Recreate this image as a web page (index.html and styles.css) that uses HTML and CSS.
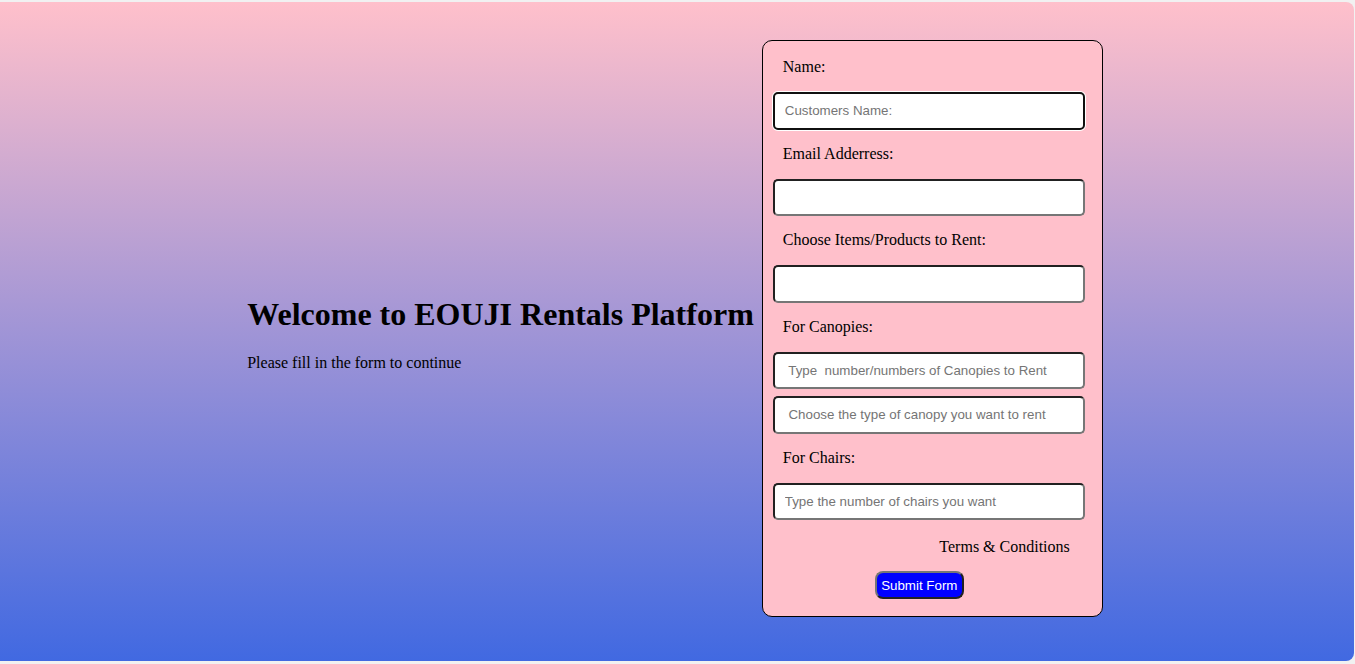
FILE: index.html
```html
<!DOCTYPE html>
<html>
<head>
<meta charset="utf-8">
<link rel="stylesheet" href="styles.css">
</head>
<body>
<div class="page">
  <div class="intro">
    <h1>Welcome to EOUJI Rentals Platform</h1>
    <p>Please fill in the form to continue</p>
  </div>
  <form class="rent-form">
    <label class="field-label">Name:</label>
    <input class="field field-focus" type="text" placeholder="Customers Name:">
    <label class="field-label">Email Adderress:</label>
    <input class="field" type="text">
    <label class="field-label">Choose Items/Products to Rent:</label>
    <input class="field" type="text">
    <label class="field-label">For Canopies:</label>
    <input class="field" type="text" placeholder=" Type  number/numbers of Canopies to Rent">
    <input class="field field-tight" type="text" placeholder=" Choose the type of canopy you want to rent">
    <label class="field-label">For Chairs:</label>
    <input class="field" type="text" placeholder="Type the number of chairs you want">
    <div class="terms">Terms &amp; Conditions</div>
    <button class="submit" type="button">Submit Form</button>
  </form>
</div>
</body>
</html>
```

FILE: styles.css
```css
html, body {
  margin: 0;
  padding: 0;
}

body {
  background: #f1f1f1;
  font-family: "Liberation Serif", "Times New Roman", serif;
  font-size: 16px;
  color: #000;
  padding-top: 2px;
}

.page {
  width: 1354px;
  height: 659px;
  border-radius: 0 8px 8px 0;
  background: linear-gradient(to bottom, #ffc0cb, #4169e1);
  display: flex;
  justify-content: center;
  align-items: center;
  gap: 8px;
  box-sizing: border-box;
  padding-right: 4px;
}

.intro h1 {
  font-size: 32px;
  font-weight: bold;
  margin: 21.44px 0;
}

.intro p {
  margin: 16px 0;
}

.rent-form {
  width: 341px;
  box-sizing: border-box;
  background: #ffc0cb;
  border: 1px solid #000;
  border-radius: 10px;
  padding: 17px 10px 17px 10px;
  display: flex;
  flex-direction: column;
  align-items: flex-start;
  margin-bottom: 6px;
}

.field-label {
  display: block;
  line-height: 18px;
  padding-left: 10px;
  margin-bottom: 16px;
}

.field {
  width: 312px;
  height: 37.5px;
  box-sizing: border-box;
  border: 2px inset rgb(118, 118, 118);
  border-radius: 5px;
  background: #fff;
  font-family: "Liberation Sans", Arial, sans-serif;
  font-size: 13.333px;
  padding: 1px 10px;
  margin-bottom: 15px;
  outline: none;
}

.field::placeholder {
  color: #757575;
}

.field-focus {
  border: 2px solid #101010;
  box-shadow: 0 0 0 1px #fff;
}

.field-tight {
  margin-top: -8px;
}

.terms {
  align-self: flex-end;
  line-height: 18px;
  margin: 3px 22px 15px 0;
}

.submit {
  margin-left: 102px;
  width: 89px;
  height: 28px;
  box-sizing: border-box;
  background: #0000ff;
  color: #fff;
  font-family: "Liberation Sans", Arial, sans-serif;
  font-size: 13.333px;
  padding: 0 4px;
  border: 2px outset #767676;
  border-radius: 8px;
}
```
